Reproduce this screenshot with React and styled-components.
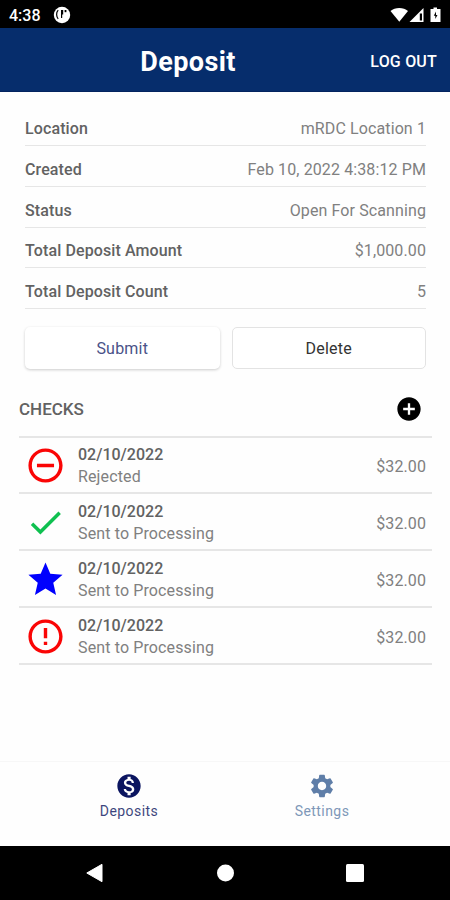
import React from "react";
import styled, {createGlobalStyle} from "styled-components";
import {
    MdAddCircle,
    MdCheck,
    MdErrorOutline,
    MdMonetizationOn,
    MdRemoveCircleOutline,
    MdSettings,
    MdStar
} from "react-icons/md";

const colors = {
    header: '#062d6c',
    navy: '#0b1560',
    slate: '#5f7ea8',
    label: '#626262',
    text: '#808080',
    line: '#e6e6e6',
    rejected: '#fa0505',
    success: '#0fc050',
    star: '#0000fe'
};

const details = [
    {label: 'Location', value: 'mRDC Location 1'},
    {label: 'Created', value: 'Feb 10, 2022 4:38:12 PM'},
    {label: 'Status', value: 'Open For Scanning'},
    {label: 'Total Deposit Amount', value: '$1,000.00'},
    {label: 'Total Deposit Count', value: '5'}
];

const checks = [
    {icon: MdRemoveCircleOutline, color: colors.rejected, date: '02/10/2022', status: 'Rejected', amount: '$32.00'},
    {icon: MdCheck, color: colors.success, date: '02/10/2022', status: 'Sent to Processing', amount: '$32.00'},
    {icon: MdStar, color: colors.star, date: '02/10/2022', status: 'Sent to Processing', amount: '$32.00'},
    {icon: MdErrorOutline, color: colors.rejected, date: '02/10/2022', status: 'Sent to Processing', amount: '$32.00'}
];

const GlobalStyle = createGlobalStyle`
    * {
        box-sizing: border-box;
    }

    body {
        margin: 0;
        background: #fff;
        font-family: Roboto, "Liberation Sans", sans-serif;
    }
`;

const Screen = styled.div`
    display: flex;
    flex-direction: column;
    width: 450px;
    height: 900px;
    overflow: hidden;
    background: #fefefe;
`;

const StatusBar = styled.div`
    display: flex;
    align-items: center;
    height: 28px;
    padding: 1px 8px 0 9px;
    background: #000;
    color: #fff;

    svg {
        display: block;
    }
`;

const Clock = styled.span`
    width: 44px;
    padding-top: 2px;
    font-size: 16px;
    font-weight: 500;
    line-height: 20px;
`;

const StatusIcons = styled.div`
    display: flex;
    align-items: center;
    margin-left: auto;
`;

const AppBar = styled.header`
    display: grid;
    grid-template-columns: 1fr auto 1fr;
    align-items: center;
    flex: none;
    height: 64px;
    padding: 5px 13px 0 0;
    background: ${colors.header};
    border-bottom: 1px solid #03245f;
    color: #fff;
`;

const Title = styled.h1`
    grid-column: 2;
    margin: 0 0 0 -61px;
    font-size: 27px;
    font-weight: 700;
    line-height: 32px;
    letter-spacing: .4px;
`;

const LogOut = styled.button`
    justify-self: end;
    padding: 0;
    border: 0;
    background: none;
    color: #fff;
    font: 500 16px/20px Roboto, sans-serif;
    letter-spacing: .2px;
`;

const Details = styled.dl`
    margin: 0;
    padding: 13.2px 24px 0 25px;
`;

const DetailRow = styled.div`
    display: flex;
    justify-content: space-between;
    align-items: center;
    height: 40.8px;
    padding-top: 7px;
    border-bottom: 1px solid ${colors.line};
    font-size: 16px;
    letter-spacing: .11px;
`;

const Label = styled.dt`
    color: ${colors.label};
    font-weight: 500;
`;

const Value = styled.dd`
    margin: 0;
    color: ${colors.text};
`;

const Actions = styled.div`
    display: grid;
    grid-template-columns: 1fr 1fr;
    gap: 12px;
    padding: 18px 24px 0 25px;
`;

const Button = styled.button`
    height: 42px;
    padding: 2px 0 0;
    border: 1px solid ${props => props.$raised ? 'transparent' : '#e3e3e3'};
    border-radius: 5px;
    background: #fff;
    box-shadow: ${props => props.$raised ? '0 1px 3px rgba(0, 0, 0, .2)' : 'none'};
    color: ${props => props.color};
    font: 400 16px/20px Roboto, sans-serif;
    letter-spacing: .2px;
`;

const SectionHeader = styled.div`
    display: flex;
    justify-content: space-between;
    align-items: center;
    height: 69px;
    margin: 0 18px 0 19px;
    padding: 13px 9px 0 0;
    border-bottom: 2px solid ${colors.line};
`;

const SectionTitle = styled.h2`
    margin: 0;
    color: ${colors.label};
    font-size: 17px;
    font-weight: 500;
`;

const CheckList = styled.ul`
    margin: 0 18px 0 19px;
    padding: 0;
    list-style: none;
`;

const CheckRow = styled.li`
    display: flex;
    align-items: center;
    height: 57px;
    padding: 3px 6px 0 6px;
    border-bottom: 2px solid ${colors.line};

    &:first-child {
        height: 56px;
        padding-top: 2px;
    }
`;

const CheckIcon = styled.span`
    display: flex;
    width: 53px;
    padding-bottom: 2px;
    color: ${props => props.color};
`;

const CheckInfo = styled.div`
    flex: 1;
    font-size: 16px;
    line-height: 22px;
`;

const CheckDate = styled.div`
    color: ${colors.label};
    font-weight: 500;
`;

const CheckStatus = styled.div`
    color: ${colors.text};
    letter-spacing: .13px;
`;

const Amount = styled.span`
    color: ${colors.text};
    font-size: 16px;
    letter-spacing: .1px;
`;

const Tabs = styled.nav`
    display: grid;
    grid-template-columns: 1fr 1fr;
    height: 85px;
    margin-top: auto;
    padding: 0 32px;
    border-top: 1px solid #f7f7f7;
`;

const Tab = styled.div`
    display: flex;
    flex-direction: column;
    align-items: center;
    padding-top: 10px;
    color: ${props => props.$active ? colors.navy : colors.slate};
`;

const TabLabel = styled.span`
    margin: 2px 0 0 1px;
    font-size: 14px;
    line-height: 18px;
    letter-spacing: .45px;
    opacity: .8;
`;

const NavBar = styled.div`
    display: flex;
    justify-content: space-between;
    align-items: center;
    flex: none;
    height: 54px;
    padding: 0 85px;
    background: #000;

    svg {
        display: block;
    }
`;

const App = () => (
    <>
        <GlobalStyle />
        <Screen>
            <StatusBar>
                <Clock>4:38</Clock>
                <svg width="18" height="18" viewBox="0 0 18 18">
                    <circle cx="9" cy="9" r="8.2" fill="#fff" />
                    <path d="M5.2 4.2C3 6.500 3.200 10.500 5.200 12.800" fill="none" stroke="#000" strokeWidth="1.200" />
                    <path d="M8 4h2.200v4.500H9.200V12H8z" fill="#000" />
                    <path d="M11.600 4h1.800v2.200h-1.800z" fill="#000" />
                </svg>
                <StatusIcons>
                    <svg width="52" height="18" viewBox="0 0 52 18">
                        <path d="M.5 5C5 .9 13.500 .9 18 5L9.300 15.800z" fill="#fff" />
                        <path d="M19.500 16L33.500 2v14z" fill="#fff" />
                        <path d="M29.800 7.500h2.200V14.500h-2.200z" fill="#000" />
                        <path d="M43.500 1.500h3.500V3h3.500v13h-10V3h3z" fill="#fff" />
                        <path d="M46 5.500l-2.200 4.300h1.500V13l2.200-4h-1.500z" fill="#000" />
                    </svg>
                </StatusIcons>
            </StatusBar>
            <AppBar>
                <Title>Deposit</Title>
                <LogOut>LOG OUT</LogOut>
            </AppBar>
            <Details>
                {details.map(item => (
                    <DetailRow key={item.label}>
                        <Label>{item.label}</Label>
                        <Value>{item.value}</Value>
                    </DetailRow>
                ))}
            </Details>
            <Actions>
                <Button $raised color="#4a5288">Submit</Button>
                <Button color="#333">Delete</Button>
            </Actions>
            <SectionHeader>
                <SectionTitle>CHECKS</SectionTitle>
                <MdAddCircle size={28} />
            </SectionHeader>
            <CheckList>
                {checks.map(({icon: Icon, color, date, status, amount}, i) => (
                    <CheckRow key={i}>
                        <CheckIcon color={color}><Icon size={41} /></CheckIcon>
                        <CheckInfo>
                            <CheckDate>{date}</CheckDate>
                            <CheckStatus>{status}</CheckStatus>
                        </CheckInfo>
                        <Amount>{amount}</Amount>
                    </CheckRow>
                ))}
            </CheckList>
            <Tabs>
                <Tab $active>
                    <MdMonetizationOn size={28} />
                    <TabLabel>Deposits</TabLabel>
                </Tab>
                <Tab>
                    <MdSettings size={28} />
                    <TabLabel>Settings</TabLabel>
                </Tab>
            </Tabs>
            <NavBar>
                <svg width="20" height="20" viewBox="0 0 20 20">
                    <path d="M1.800 10L17 1.300v17.400z" fill="#fff" stroke="#fff" strokeLinejoin="round" />
                </svg>
                <svg width="18" height="18" viewBox="0 0 18 18">
                    <circle cx="9.500" cy="9" r="8.500" fill="#fff" />
                </svg>
                <svg width="20" height="20" viewBox="0 0 20 20">
                    <rect x="1" y="1" width="18" height="18" rx="1.500" fill="#fff" />
                </svg>
            </NavBar>
        </Screen>
    </>
);

export default App;
